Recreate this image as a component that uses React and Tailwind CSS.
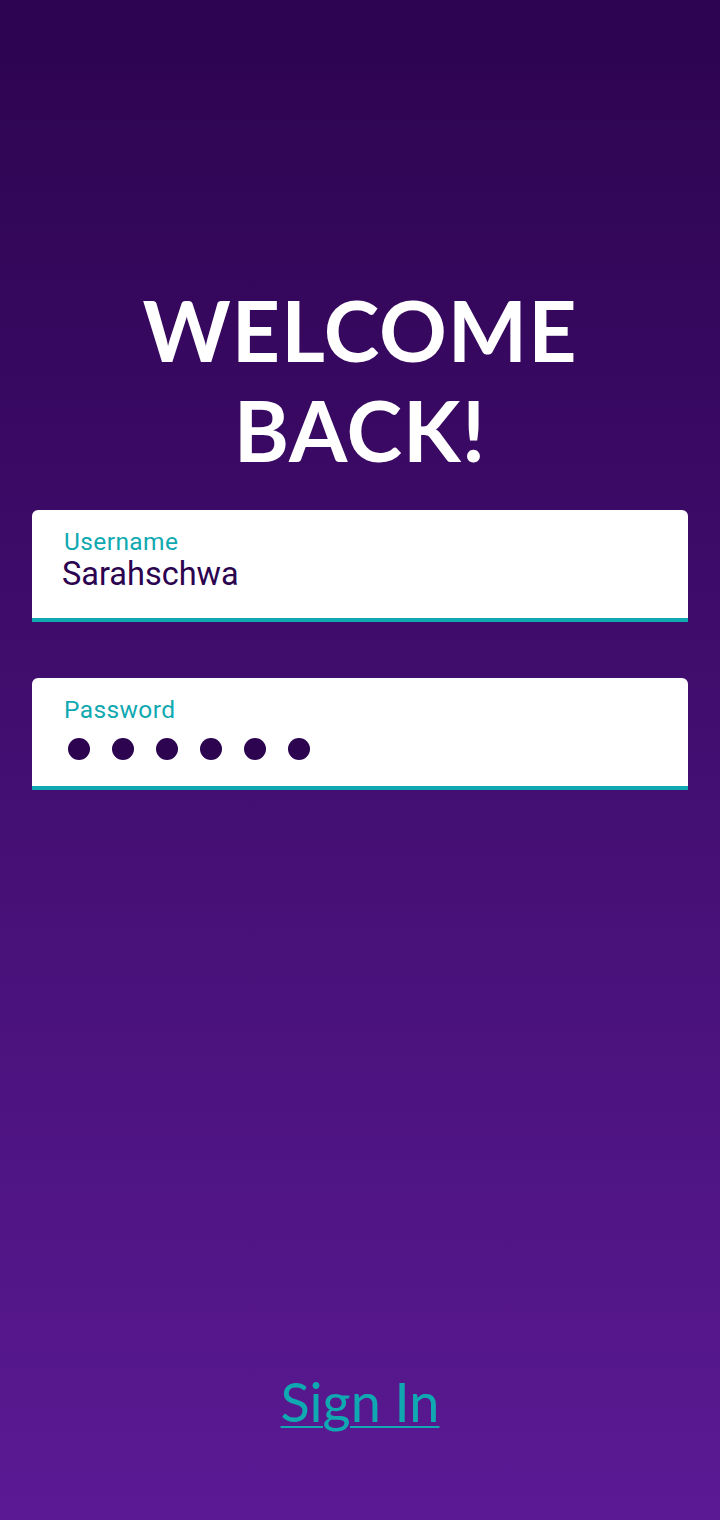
export default function App() {
  return (
    <div className="w-[720px] h-[1520px] flex flex-col items-center bg-gradient-to-b from-[#2c0450] to-[#5b1a94]" style={{ fontFamily: "Roboto, sans-serif" }}>
      <h1
        className="mt-[280px] text-white text-center font-bold text-[84px] leading-[100px] tracking-[1px]"
        style={{ fontFamily: "Lato, sans-serif" }}
      >
        WELCOME
        <br />
        BACK!
      </h1>

      <div className="mt-[30px] w-[656px] flex flex-col gap-14">
        <div className="h-[112px] bg-white rounded-t-[6px] border-b-4 border-[#10a9b1] pl-8 pt-[16px]">
          <div className="text-[#10a9b1] text-[24.5px] leading-[32px] tracking-[0.4px]">Username</div>
          <div className="text-[#2c0450] text-[32.5px] leading-[32px] -ml-[2px]">Sarahschwa</div>
        </div>
        <div className="h-[112px] bg-white rounded-t-[6px] border-b-4 border-[#10a9b1] pl-8 pt-[16px]">
          <div className="text-[#10a9b1] text-[24.5px] leading-[32px] tracking-[0.4px]">Password</div>
          <div className="flex gap-[22px] mt-[12px] ml-1">
            {[0, 1, 2, 3, 4, 5].map((i) => (
              <span key={i} className="w-[22px] h-[22px] rounded-full bg-[#2c0450]" />
            ))}
          </div>
        </div>
      </div>

      <a
        href="#"
        className="mt-auto mb-[86px] text-[#10a9b1] text-[54px] leading-[64px] underline underline-offset-[4px] decoration-2"
        style={{ fontFamily: "Lato, sans-serif" }}
      >
        Sign In
      </a>
    </div>
  );
}
